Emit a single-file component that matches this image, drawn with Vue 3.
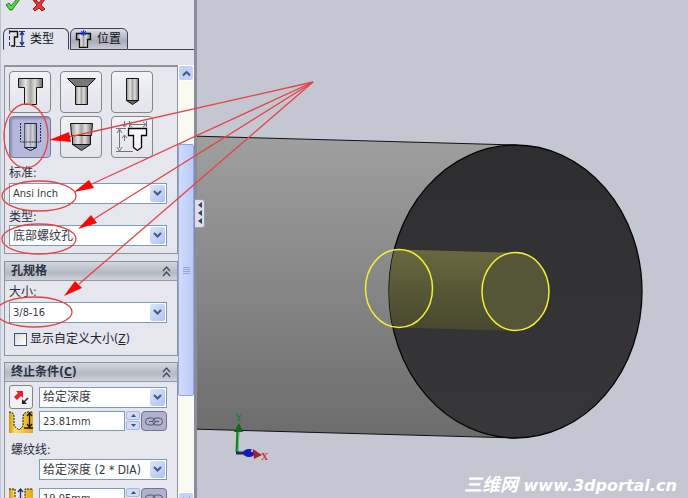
<script setup>
import { ref } from 'vue'

const activeTab = ref('type')
const activeHole = ref('tap')
const standard = ref('Ansi Inch')
const holeType = ref('底部螺纹孔')
const size = ref('3/8-16')
const custom = ref(false)
const endCondition = ref('给定深度')
const depth = ref('23.81mm')
const threadCondition = ref('给定深度 (2 * DIA)')
const threadDepth = ref('19.05mm')

const holes = [
  { id: 'bore', label: '柱形沉头孔' },
  { id: 'sink', label: '锥形沉头孔' },
  { id: 'hole', label: '孔' },
  { id: 'tap', label: '直螺纹孔' },
  { id: 'pipe', label: '锥形螺纹孔' },
  { id: 'legacy', label: '旧制孔' }
]

const leaders = [
  { x: 69, y: 137, head: '49,140 69,132 71,142' },
  { x: 92, y: 184, head: '74,192 89,180 94,188' },
  { x: 94, y: 219, head: '78,229 91,215 97,223' },
  { x: 79, y: 284, head: '64,296 75,281 82,288' }
]
const rings = [
  { cx: 26, cy: 136, rx: 22, ry: 32 },
  { cx: 39, cy: 196, rx: 37, ry: 15 },
  { cx: 39, cy: 239, rx: 37, ry: 15 },
  { cx: 34, cy: 312, rx: 38, ry: 15 }
]
</script>

<template>
  <div class="window">
    <aside class="panel">
      <div class="actions">
        <button class="plain" aria-label="确定">
          <svg width="16" height="12" viewBox="0 0 16 12"><path d="M1 5l3-2 2 3L13-2l2 1L7 10H5z" fill="#5edb3c" stroke="#187a18" /></svg>
        </button>
        <button class="plain" aria-label="取消">
          <svg width="14" height="12" viewBox="0 0 14 12"><path d="M1 0h3l3 3 3-4h3L9 5l4 4-3 2-3-3-4 3-2-2 4-4z" fill="#e63c34" stroke="#981a18" /></svg>
        </button>
      </div>

      <nav class="tabs">
        <button class="tab" :class="{ active: activeTab === 'type' }" @click="activeTab = 'type'">
          <svg width="18" height="18" viewBox="0 0 18 18">
            <defs>
              <linearGradient id="steel" x1="0" x2="1" y1="0" y2="0">
                <stop offset="0" stop-color="#8d8d8b" /><stop offset=".3" stop-color="#e6e6e3" />
                <stop offset=".5" stop-color="#a5a5a2" /><stop offset=".68" stop-color="#dededb" /><stop offset="1" stop-color="#70706e" />
              </linearGradient>
            </defs>
            <path d="M2 1h8v6H7v9H2z" fill="#e2e1da" />
            <path d="M2 1.500h7.500v5.500h-3v9H3" fill="none" stroke="#111" stroke-width="1.400" />
            <path d="M1.500 0v17" stroke="#26386f" stroke-dasharray="4 2" />
            <path d="M11 1.500h6M8 16.500h9" stroke="#26386f" />
            <path d="M14 3v12M12 5l2-3 2 3M12 12l2 3 2-3" fill="none" stroke="#17338c" stroke-width="1.300" />
          </svg>
          <span>类型</span>
        </button>
        <button class="tab" :class="{ active: activeTab === 'place' }" @click="activeTab = 'place'">
          <svg width="18" height="18" viewBox="0 0 18 18">
            <path d="M1.500 3.500h14v6h-3v8h-8v-8h-3z" fill="url(#steel)" stroke="#111" stroke-width="1.300" />
            <path d="M8.500 0v6M5.500 3h6M6 1l5 4M11 1L6 5" stroke="#1431e8" />
          </svg>
          <span>位置</span>
        </button>
        <i class="rule"></i>
      </nav>

      <div class="scroller">
        <div class="groups">
          <section class="group types">
            <div class="holes">
              <button v-for="h in holes" :key="h.id" class="hole" :class="{ pressed: activeHole === h.id }" :aria-label="h.label" @click="activeHole = h.id">
                <svg width="40" height="40" viewBox="0 0 40 40">
                  <path v-if="h.id === 'bore'" d="M8.500 6.500h24v9h-6v17h-12v-17h-6z" fill="url(#steel)" stroke="#151515" />
                  <g v-else-if="h.id === 'sink'" stroke="#151515">
                    <path d="M6.500 6.500h28l-8 8h-12z" fill="#777" />
                    <path d="M14.500 14.500h12v18h-12z" fill="url(#steel)" />
                  </g>
                  <g v-else-if="h.id === 'hole'" stroke="#151515">
                    <path d="M14.500 28.500h12l-6 4z" fill="#666" />
                    <path d="M14.500 6.500h12v22h-12z" fill="url(#steel)" />
                  </g>
                  <g v-else-if="h.id === 'tap'" stroke="#24284c">
                    <path d="M14.500 6.500h12v24l-6 3-6-3z" fill="url(#steel)" opacity=".65" />
                    <path d="M14.500 6.500h12v24h-12l6 3 6-3" fill="none" />
                    <path d="M10.500 6v19h20V6" fill="none" stroke-dasharray="2 1" />
                  </g>
                  <g v-else-if="h.id === 'pipe'" stroke="#151515">
                    <path d="M11.500 27.500h18l-9 6z" fill="#777" />
                    <path d="M11.500 18.500h18v9h-18z" fill="url(#steel)" />
                    <path d="M9.500 6.500h22l-1 12h-20z" fill="url(#steel)" />
                  </g>
                  <g v-else fill="none" stroke="#73747a">
                    <path d="M16.500 11.500h18v7h-5v12l-4 3-4-3v-12h-5z" fill="#f6f6f8" stroke="#050505" stroke-width="1.300" />
                    <path d="M17.500 4v6M34.500 4v6M18 7.500h15M20 5l-3 2.500 3 2.500M31 5l3 2.500-3 2.500M4 11.500h10M7.500 13v18M5 16l2.500-4 2.500 4M5 30l2.500 4 2.500-4M4 34.500h17M12.500 4v5M10 7l2.500 3L15 7M12.500 18v6M10 21l2.500-3 2.500 3" />
                  </g>
                </svg>
              </button>
            </div>
            <label class="caption" for="standard">标准:</label>
            <div class="combo">
              <select id="standard" v-model="standard"><option>Ansi Inch</option></select>
              <span class="drop"><svg width="9" height="7" viewBox="0 0 9 7"><path d="M1 1l3.500 3.500L8 1" /></svg></span>
            </div>
            <label class="caption" for="holetype">类型:</label>
            <div class="combo">
              <select id="holetype" v-model="holeType" class="cjk"><option>底部螺纹孔</option></select>
              <span class="drop"><svg width="9" height="7" viewBox="0 0 9 7"><path d="M1 1l3.500 3.500L8 1" /></svg></span>
            </div>
          </section>

          <section class="group sizes">
            <h2>孔规格<svg width="9" height="11" viewBox="0 0 9 11"><path d="M1 5l3.500-4L8 5M1 10l3.500-4L8 10" /></svg></h2>
            <label class="caption" for="size">大小:</label>
            <div class="combo">
              <select id="size" v-model="size"><option>3/8-16</option></select>
              <span class="drop"><svg width="9" height="7" viewBox="0 0 9 7"><path d="M1 1l3.500 3.500L8 1" /></svg></span>
            </div>
            <label class="check"><input v-model="custom" type="checkbox"><span>显示自定义大小(<u>Z</u>)</span></label>
          </section>

          <section class="group">
            <h2><span>终止条件(<u>C</u>)</span><svg width="9" height="11" viewBox="0 0 9 11"><path d="M1 5l3.500-4L8 5M1 10l3.500-4L8 10" /></svg></h2>
            <div class="row first">
              <button class="reverse" aria-label="反向">
                <svg width="20" height="20" viewBox="0 0 20 20">
                  <path d="M5 4h7v7l-2-2-4 4-3-3 4-4z" fill="#e8202a" />
                  <path d="M17 11l-4 4" stroke="#222" stroke-width="1.500" />
                  <path d="M11 12v5h5z" fill="#222" />
                </svg>
              </button>
              <div class="combo">
                <select v-model="endCondition" class="cjk" aria-label="终止条件"><option>给定深度</option></select>
                <span class="drop"><svg width="9" height="7" viewBox="0 0 9 7"><path d="M1 1l3.500 3.500L8 1" /></svg></span>
              </div>
            </div>
            <div class="row">
              <svg class="mark" width="24" height="22" viewBox="0 0 24 22">
                <defs><linearGradient id="gold" x1="0" x2="1"><stop offset="0" stop-color="#c99817" /><stop offset=".25" stop-color="#ffe25c" /><stop offset=".7" stop-color="#f0bd25" /><stop offset="1" stop-color="#e0a912" /></linearGradient></defs>
                <path d="M0 1c4 0 5 2 5 5v9l5 5 4-5V6c0-3 2-5 5-5h5v21H0z" fill="url(#gold)" />
                <path d="M0 1c4 0 5 2 5 5v9l5 4 4-4V6c0-3 2-5 5-5h5" fill="none" stroke="#17120a" stroke-dasharray="2 1" />
                <path d="M20.500 2v14M18 5l2.500-3L23 5M18 13l2.500 3 2.500-3M15 17h9" fill="none" stroke="#15151b" stroke-width="1.300" />
              </svg>
              <input v-model="depth" type="text" aria-label="深度">
              <div class="spin">
                <button aria-label="增加"><svg width="5" height="3" viewBox="0 0 5 3"><path d="M0 3l2.500-3L5 3z" /></svg></button>
                <button aria-label="减少"><svg width="5" height="3" viewBox="0 0 5 3"><path d="M0 0l2.500 3L5 0z" /></svg></button>
              </div>
              <button class="link" aria-label="链接"><svg width="18" height="9" viewBox="0 0 18 9"><path d="M7 1H4a3.500 3.500 0 0 0 0 7h3c4 0 4-7 0-7M11 1h3a3.500 3.500 0 0 1 0 7h-3c-4 0-4-7 0-7M4 4.500h4M10 4.500h4" /></svg></button>
            </div>
            <label class="caption thread" for="thread">螺纹线:</label>
            <div class="combo indent">
              <select id="thread" v-model="threadCondition" class="cjk"><option>给定深度 (2 * DIA)</option></select>
              <span class="drop"><svg width="9" height="7" viewBox="0 0 9 7"><path d="M1 1l3.500 3.500L8 1" /></svg></span>
            </div>
            <div class="row last">
              <svg class="mark" width="24" height="22" viewBox="0 0 24 22">
                <path d="M0 1h6v15l5 4 5-4V1h8v21H0z" fill="url(#gold)" />
                <path d="M0 1h6v15l5 4 5-4V1h8" fill="none" stroke="#17120a" stroke-dasharray="2 1" />
                <path d="M11.500 1v12M9 4l2.500-3L14 4M9 10l2.500 3 2.500-3" fill="none" stroke="#1a2a6c" stroke-width="1.300" />
              </svg>
              <input v-model="threadDepth" type="text" aria-label="螺纹线深度">
              <div class="spin">
                <button aria-label="增加"><svg width="5" height="3" viewBox="0 0 5 3"><path d="M0 3l2.500-3L5 3z" /></svg></button>
                <button aria-label="减少"><svg width="5" height="3" viewBox="0 0 5 3"><path d="M0 0l2.500 3L5 0z" /></svg></button>
              </div>
              <button class="link" aria-label="链接"><svg width="18" height="9" viewBox="0 0 18 9"><path d="M7 1H4a3.500 3.500 0 0 0 0 7h3c4 0 4-7 0-7M11 1h3a3.500 3.500 0 0 1 0 7h-3c-4 0-4-7 0-7M4 4.500h4M10 4.500h4" /></svg></button>
            </div>
          </section>
        </div>

        <div class="scrollbar">
          <button class="step" aria-label="向上滚动"><svg width="9" height="7" viewBox="0 0 9 7"><path d="M1 5.500L4.500 2 8 5.500" /></svg></button>
          <div class="before"></div>
          <div class="thumb"><i></i><i></i><i></i><i></i></div>
          <div class="after"></div>
          <button class="step" aria-label="向下滚动"><svg width="9" height="7" viewBox="0 0 9 7"><path d="M1 1l3.500 3.500L8 1" /></svg></button>
        </div>
      </div>
    </aside>

    <main class="view">
      <svg class="model" viewBox="197 0 491 498">
        <defs>
          <linearGradient id="body" x1="0" x2="0" y1="0" y2="1"><stop offset="0" stop-color="#a09f9f" /><stop offset=".5" stop-color="#868686" /><stop offset="1" stop-color="#6c6c6c" /></linearGradient>
          <linearGradient id="face" x1="0" x2="0" y1="0" y2="1"><stop offset="0" stop-color="#2e2d30" /><stop offset="1" stop-color="#37373a" /></linearGradient>
          <linearGradient id="drill" x1="0" x2="0" y1="0" y2="1"><stop offset="0" stop-color="#69693f" /><stop offset="1" stop-color="#47472f" /></linearGradient>
          <clipPath id="disc"><ellipse cx="515.500" cy="291.500" rx="126.500" ry="146.500" /></clipPath>
        </defs>
        <path d="M190 136l326 9v293l-326-9z" fill="url(#body)" stroke="#111" />
        <ellipse cx="515.500" cy="291.500" rx="126.500" ry="146.500" fill="url(#face)" stroke="#050505" stroke-width="1.300" />
        <path d="M380 249l136 4v78l-136-4z" fill="url(#drill)" clip-path="url(#disc)" />
        <ellipse cx="515.500" cy="291.500" rx="33.500" ry="39" fill="#555538" stroke="#f4ee35" stroke-width="1.500" />
        <ellipse cx="399" cy="288.500" rx="33.500" ry="39" fill="none" stroke="#f4ee35" stroke-width="1.500" />
        <g>
          <path d="M237 452l1-24" stroke="#157e1c" stroke-width="3" />
          <path d="M238 452l1-24" stroke="#72c879" />
          <path d="M234 432l5-9 4 9z" fill="#14671a" />
          <path d="M236 453h10" stroke="#202a62" stroke-width="3" />
          <ellipse cx="249" cy="453" rx="6" ry="4" fill="#1717bd" />
          <path d="M253 449l9 6-8 4z" fill="#a5222c" />
          <circle cx="252" cy="451" r="1" fill="#eef" />
          <text x="235" y="421" class="axis green">Y</text>
          <text x="261" y="460" class="axis red">X</text>
        </g>
        <text x="464" y="491" class="credit"><tspan class="han">三维网</tspan> www.3dportal.cn</text>
      </svg>
      <button class="handle" aria-label="折叠面板">
        <svg width="4" height="23" viewBox="0 0 4 23"><path d="M4 0v6L0 3zM4 8v6l-4-3zM4 16v6l-4-3z" /></svg>
      </button>
    </main>

    <svg class="notes" width="330" height="340" viewBox="0 0 330 340">
      <g v-for="l in leaders" :key="l.head">
        <path :d="`M313 82L${l.x} ${l.y}`" />
        <polygon :points="l.head" />
      </g>
      <ellipse v-for="r in rings" :key="r.cy" :cx="r.cx" :cy="r.cy" :rx="r.rx" :ry="r.ry" />
    </svg>
  </div>
</template>

<style>
body { margin: 0; overflow: hidden; }
</style>

<style scoped>
* { box-sizing: border-box; }
.window {
  position: relative;
  display: flex;
  height: 100vh;
  overflow: hidden;
  background: #c4c7d2;
  color: #20242e;
  font: 12px/16px "DejaVu Sans Condensed", "Noto Sans CJK SC", sans-serif;
}
button, select, input { margin: 0; font: inherit; color: inherit; border-radius: 0; }
button { display: flex; align-items: center; justify-content: center; padding: 0; }
svg { display: block; flex: none; }
.panel {
  display: flex;
  flex-direction: column;
  flex: none;
  width: 197px;
  background: #e1e4ec;
  border-left: 1px solid #bcc3d2;
  border-right: 3px solid #8b8a9e;
}
.actions { display: flex; gap: 11px; height: 28px; padding-left: 4px; align-items: flex-start; }
.plain { border: 0; background: none; }
.tabs { display: flex; flex: none; height: 22px; padding-left: 2px; }
.tab {
  gap: 4px;
  width: 58px;
  padding-left: 4px;
  justify-content: flex-start;
  border: 1px solid #3c3f55;
  border-radius: 6px 6px 0 0;
  background: linear-gradient(#dcdde6, #a9acbb 60%, #c8cad5);
  color: #111;
}
.tab.active { width: 66px; margin-right: 1px; border-bottom-color: transparent; background: #e1e4ec; }
.rule { flex: 1; border-bottom: 1px solid #3c3f55; }
.scroller { display: flex; flex: 1; min-height: 0; margin-top: 15px; overflow: hidden; background: #dfe3ec; }
.groups { flex: 1; padding: 0 0 0 3px; }
.group { border: 1px solid #8f939e; background: #e5e6ee; padding: 0 10px 0 4px; margin-bottom: 6px; }
.types { border-top-width: 2px; height: 189px; margin-bottom: 7px; padding-top: 4px; }
.sizes { height: 95px; }
.holes { display: grid; grid-template-columns: repeat(3, 42px); gap: 3px 9px; margin-bottom: 7px; }
.hole { height: 42px; border: 1px solid #85868c; border-radius: 4px; background: linear-gradient(#f1f2f6, #e3e4ec); }
.hole.pressed { background: #b6b8da; box-shadow: inset 2px 2px 2px #8f91b4; border-color: #777a98; }
.caption { display: block; height: 16px; margin-bottom: 2px; color: #2b303c; }
.combo + .caption { margin-top: 5px; margin-bottom: 0; }
.combo { position: relative; flex: 1; height: 21px; }
select, input[type="text"] {
  display: block;
  width: 100%;
  height: 21px;
  padding: 0 18px 0 3px;
  appearance: none;
  border: 1px solid #7a9db4;
  background: #fff;
  font-size: 11px;
  color: #363a45;
  outline: 0;
}
select.cjk { font-size: 12px; }
.drop {
  position: absolute;
  top: 2px;
  right: 2px;
  display: grid;
  place-items: center;
  width: 15px;
  height: 17px;
  border-radius: 2px;
  background: linear-gradient(135deg, #dbe5fc, #afc2f2);
  pointer-events: none;
}
.drop path, .step path { fill: none; stroke: #46597d; stroke-width: 2; }
h2 {
  display: flex;
  align-items: center;
  justify-content: space-between;
  height: 19px;
  margin: 0 -10px 3px -4px;
  padding: 0 6px;
  border-bottom: 1px solid #969aa5;
  background: linear-gradient(#d3d6df, #b4b9c4 60%, #ced1d9);
  color: #2c3342;
  font-size: 12px;
  font-weight: 700;
}
h2 path { fill: none; stroke: #454c5c; stroke-width: 1.3; }
.check { display: flex; align-items: center; gap: 3px; margin: 8px 0 0 5px; white-space: nowrap; }
.check input { width: 13px; height: 13px; appearance: none; border: 1px solid #32557e; background: linear-gradient(135deg, #dcdcd7, #fff); }
.check input:checked { background: #4a6ea0; }
.row { display: flex; height: 21px; margin-top: 2px; }
.row.first { height: 24px; margin-top: 0; align-items: center; gap: 6px; }
.reverse { width: 24px; height: 24px; border: 1px solid #82838b; border-radius: 3px; background: #f0f1f5; }
.mark { margin-right: 6px; }
.row input[type="text"] { flex: 1; width: 0; height: 20px; padding-right: 2px; }
.spin { display: grid; grid-template-rows: 9px 9px; gap: 1px; width: 15px; padding-left: 1px; margin-right: 1px; }
.spin button { border: 1px solid #a9bade; border-radius: 2px; background: #cfdbf8; }
.spin path { fill: #3e5078; }
.link { width: 26px; height: 20px; border: 1px solid #73748d; border-radius: 4px; background: #b0b1ca; }
.link path { fill: none; stroke: #55576f; stroke-width: 1; }
.combo + .caption.thread, .thread { margin: 10px 0 1px 2px; }
.indent { margin-left: 30px; }
.row.last { margin-top: 8px; }
.scrollbar { display: flex; flex-direction: column; width: 16px; margin-bottom: -10px; background: #fafaf3; }
.step { width: 16px; height: 16px; flex: none; border: 1px solid #fff; border-radius: 3px; background: #c2d2fa; }
.before { flex: 63; }
.thumb { display: flex; flex: 252; flex-direction: column; align-items: center; justify-content: center; gap: 1px; border: 1px solid #91a6dc; border-radius: 2px; background: linear-gradient(90deg, #d0dcfd, #b9cbf8); }
.thumb i { width: 7px; height: 1px; background: #8fa5dd; }
.after { flex: 96; }
.view { position: relative; flex: 1; min-width: 0; }
.model { width: 100%; }
.handle { position: absolute; left: -2px; top: 199px; width: 10px; height: 29px; border: 1px solid #9a9cac; border-left: 0; border-radius: 0 3px 3px 0; background: #dcdfe9; }
.handle path { fill: #39405c; }
.axis { font: 700 10px "Liberation Serif", serif; }
.green { fill: #18832a; }
.red { fill: #dc2634; }
.credit { fill: #fff; font: italic 700 16px "DejaVu Sans", "Noto Sans CJK SC", sans-serif; }
.han { font-size: 18px; }
.notes { position: absolute; left: 0; top: 0; pointer-events: none; }
.notes path, .notes ellipse { fill: none; stroke: #e34444; stroke-width: 1.3; }
.notes polygon { fill: #fb0606; }
</style>
